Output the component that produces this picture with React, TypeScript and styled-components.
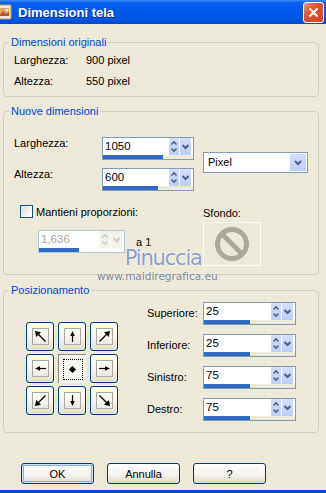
import { Fragment } from "react";
import styled, { createGlobalStyle } from "styled-components";

const GlobalStyle = createGlobalStyle`
  html, body {
    margin: 0;
    padding: 0;
    background: #ece9d8;
  }
  body {
    font-family: "Liberation Sans", Arial, sans-serif;
    font-size: 11px;
    color: #000;
  }
  * {
    box-sizing: border-box;
  }
`;

const Window = styled.div`
  position: relative;
  width: 326px;
  height: 493px;
  display: flex;
  flex-direction: column;
  background: #ece9d8;
  border-bottom: 3px solid #0841d8;
  overflow: hidden;
`;

const TitleBar = styled.div`
  height: 24px;
  flex: none;
  display: flex;
  align-items: center;
  padding-right: 2px;
  background: linear-gradient(
    to bottom,
    #3b8af4 0%,
    #0a62ef 12%,
    #0058e8 45%,
    #0056e6 80%,
    #0049cc 100%
  );
`;

const TitleIcon = styled.svg`
  flex: none;
  margin-left: -4px;
`;

const TitleText = styled.span`
  flex: 1;
  margin-left: 6px;
  font-weight: bold;
  font-size: 13px;
  color: #fff;
  text-shadow: 1px 1px 0 #0b2f9c;
`;

const CloseButton = styled.div`
  width: 21px;
  height: 21px;
  border: 1px solid #fff;
  border-radius: 3px;
  background: linear-gradient(135deg, #f0a085 0%, #e2552f 35%, #d8431d 100%);
  display: flex;
  align-items: center;
  justify-content: center;
`;

const Body = styled.div`
  flex: 1;
  display: flex;
  flex-direction: column;
  padding: 12px 7px 0 3px;
`;

const Group = styled.fieldset<{ $pad: string; $gap?: number }>`
  margin: ${(p) => p.$gap ?? 0}px 0 0 0;
  min-width: 0;
  border: 1px solid #d0d0bf;
  border-radius: 4px;
  padding: ${(p) => p.$pad};
`;

const Legend = styled.legend`
  margin-left: -5px;
  padding: 0 2px;
  color: #0046d5;
  font-size: 11px;
  line-height: 13px;
`;

const InfoGrid = styled.div`
  display: grid;
  grid-template-columns: 72px auto;
  grid-auto-rows: 21px;
  align-items: center;
`;

const SizeRow = styled.div`
  display: flex;
  align-items: flex-start;
`;

const SizeFields = styled.div<{ $label: number; $gap: number }>`
  display: grid;
  grid-template-columns: ${(p) => p.$label}px auto;
  grid-auto-rows: 23px;
  row-gap: ${(p) => p.$gap}px;
`;

const Label = styled.span<{ $center?: boolean }>`
  line-height: ${(p) => (p.$center ? "23px" : "13px")};
  white-space: nowrap;
`;

const SpinBox = styled.div<{ $w: number; $disabled?: boolean }>`
  width: ${(p) => p.$w}px;
  height: 23px;
  border: 1px solid ${(p) => (p.$disabled ? "#b4c3d8" : "#7f9db9")};
  background: #fff;
  display: flex;
  flex-direction: column;
`;

const SpinTop = styled.div`
  flex: 1;
  display: flex;
  padding-right: 2px;
`;

const SpinValue = styled.span<{ $disabled?: boolean }>`
  flex: 1;
  padding-left: 2px;
  line-height: 17px;
  font-size: 11.5px;
  color: ${(p) => (p.$disabled ? "#aca899" : "#000")};
`;

const SpinButton = styled.span<{ $w: number; $disabled?: boolean }>`
  width: ${(p) => p.$w}px;
  margin-left: 1px;
  display: flex;
  align-items: center;
  justify-content: center;
  background: ${(p) =>
    p.$disabled
      ? "#f1f0ea"
      : "linear-gradient(to bottom, #d3defc 0%, #bccdf9 100%)"};
`;

const Track = styled.div<{ $disabled?: boolean }>`
  height: 4px;
  background: ${(p) => (p.$disabled ? "#ffffff" : "#ece9d8")};
`;

const Fill = styled.div<{ $fill: number }>`
  width: ${(p) => p.$fill}px;
  height: 100%;
  background: #316ac5;
`;

const Combo = styled.div`
  width: 108px;
  height: 21px;
  margin: 15px 0 0 9px;
  border: 1px solid #7f9db9;
  background: #fff;
  padding: 1px;
  display: flex;
  align-items: stretch;
`;

const ComboText = styled.span`
  flex: 1;
  padding-left: 3px;
  line-height: 17px;
`;

const ComboButton = styled.span`
  width: 16px;
  display: flex;
  align-items: center;
  justify-content: center;
  background: linear-gradient(to bottom, #d3defc 0%, #bccdf9 100%);
`;

const ProportionRow = styled.div`
  display: flex;
  margin-top: 14px;
`;

const ProportionLeft = styled.div`
  width: 189px;
  display: flex;
  flex-direction: column;
`;

const CheckLine = styled.label`
  display: flex;
  align-items: center;
  height: 13px;
  padding-left: 6px;
  gap: 3px;
`;

const CheckBox = styled.span`
  width: 13px;
  height: 13px;
  flex: none;
  border: 1px solid #1c5180;
  background: linear-gradient(135deg, #dcdbd5 0%, #ffffff 90%);
`;

const RatioLine = styled.div`
  display: flex;
  align-items: center;
  margin-top: 12px;
  padding-left: 24px;
  gap: 11px;
`;

const BackgroundCol = styled.div`
  display: flex;
  flex-direction: column;
  padding-top: 2px;
`;

const Swatch = styled.div`
  width: 58px;
  height: 44px;
  margin-top: 2px;
  border: 1px solid #fbfbf8;
  display: flex;
  align-items: center;
  justify-content: center;
`;

const PlaceRow = styled.div`
  display: flex;
  align-items: flex-start;
`;

const PosGrid = styled.div`
  display: grid;
  grid-template-columns: repeat(3, 28px);
  grid-auto-rows: 29px;
  gap: 3px 4px;
  margin: 20px 0 0 12px;
`;

const PosButton = styled.div<{ $selected?: boolean }>`
  display: flex;
  align-items: center;
  justify-content: center;
  ${(p) =>
    p.$selected
      ? `
    border-top: 1px solid #8a877c;
    border-left: 1px solid #8a877c;
    background: #f6f5ef;
  `
      : `
    border: 1px solid #003c74;
    border-radius: 3px;
    background: linear-gradient(to bottom, #ffffff 0%, #f4f3ee 55%, #e2dfd5 100%);
  `}
`;

const FocusRect = styled.div`
  width: 20px;
  height: 21px;
  border: 1px dotted #000;
  display: flex;
  align-items: center;
  justify-content: center;
`;

const Diamond = styled.div`
  width: 5px;
  height: 5px;
  background: #000;
  transform: rotate(45deg);
`;

const MarginFields = styled(SizeFields)`
  margin-left: 29px;
`;

const ButtonRow = styled.div`
  display: flex;
  gap: 13px;
  margin-top: 30px;
  padding-left: 18px;
`;

const DialogButton = styled.button<{ $default?: boolean }>`
  width: 73px;
  height: 21px;
  padding: 0;
  border: 1px solid #003c74;
  border-radius: 3px;
  font-family: "Liberation Sans", Arial, sans-serif;
  font-size: 11px;
  color: #000;
  background: linear-gradient(to bottom, #ffffff 0%, #f2f1ec 60%, #dcd8cc 100%);
  box-shadow: ${(p) =>
    p.$default ? "inset 0 0 0 1px #cfe0fc, inset 0 0 0 2px #8fb2ec" : "none"};
`;

const Watermark = styled.div`
  position: absolute;
  left: 97px;
  top: 246px;
  display: flex;
  flex-direction: column;
  align-items: center;
  pointer-events: none;
`;

const WatermarkName = styled.span`
  margin-left: 12px;
  font-family: "DejaVu Sans", sans-serif;
  font-size: 21px;
  line-height: 24px;
  letter-spacing: -1.2px;
  color: #8e9fc8;
  text-shadow: 0 0 2px #fff, 0 0 1px #fff;
`;

const WatermarkSite = styled.span`
  font-family: "DejaVu Sans", sans-serif;
  font-size: 10.5px;
  line-height: 12px;
  color: #7d8797;
  text-shadow: 0 0 2px #fff;
`;

function SpinChevrons({ disabled }: { disabled?: boolean }) {
  const c = disabled ? "#cfcdc3" : "#4d6185";
  return (
    <svg width="10" height="17" viewBox="0 0 10 17">
      <path d="M2.5 6.5 L5 4 L7.5 6.5" fill="none" stroke={c} strokeWidth="1.6" />
      <path d="M2.5 10.5 L5 13 L7.5 10.5" fill="none" stroke={c} strokeWidth="1.6" />
    </svg>
  );
}

function DropChevron({ disabled, w = 11 }: { disabled?: boolean; w?: number }) {
  const c = disabled ? "#cfcdc3" : "#4d6185";
  const m = w / 2;
  return (
    <svg width={w} height="17" viewBox={`0 0 ${w} 17`}>
      <path
        d={`M${m - 3} 7 L${m} 10 L${m + 3} 7`}
        fill="none"
        stroke={c}
        strokeWidth="2"
      />
    </svg>
  );
}

function Spin({
  value,
  width,
  fill,
  disabled,
}: {
  value: string;
  width: number;
  fill: number;
  disabled?: boolean;
}) {
  return (
    <SpinBox $w={width} $disabled={disabled}>
      <SpinTop>
        <SpinValue $disabled={disabled}>{value}</SpinValue>
        <SpinButton $w={10} $disabled={disabled}>
          <SpinChevrons disabled={disabled} />
        </SpinButton>
        <SpinButton $w={11} $disabled={disabled}>
          <DropChevron disabled={disabled} />
        </SpinButton>
      </SpinTop>
      <Track $disabled={disabled}>
        <Fill $fill={fill} />
      </Track>
    </SpinBox>
  );
}

type Dir = "nw" | "n" | "ne" | "w" | "c" | "e" | "sw" | "s" | "se";

const straight: Record<string, number> = { n: 0, e: 90, s: 180, w: 270 };
const diagonal: Record<string, number> = { nw: 0, ne: 90, se: 180, sw: 270 };

function Arrow({ dir }: { dir: Dir }) {
  const isDiag = dir in diagonal;
  const rot = isDiag ? diagonal[dir] : straight[dir];
  return (
    <svg width="17" height="17" viewBox="0 0 17 17">
      <rect x="0.5" y="0.5" width="16" height="16" fill="none" stroke="#a8a69d" />
      <g transform={`rotate(${rot} 8.5 8.5)`}>
        {isDiag ? (
          <>
            <path d="M13.5 13.5 L5 5" stroke="#000" strokeWidth="1.2" />
            <path d="M3 3 L9 4.2 L4.2 9 Z" fill="#000" />
          </>
        ) : (
          <>
            <path d="M8.5 14 V6" stroke="#000" strokeWidth="1.2" />
            <path d="M8.5 3 L10.8 8 L6.2 8 Z" fill="#000" />
          </>
        )}
      </g>
    </svg>
  );
}

const dirs: Dir[] = ["nw", "n", "ne", "w", "c", "e", "sw", "s", "se"];

const margins = [
  { label: "Superiore:", value: "25" },
  { label: "Inferiore:", value: "25" },
  { label: "Sinistro:", value: "75" },
  { label: "Destro:", value: "75" },
];

export default function App() {
  return (
    <>
      <GlobalStyle />
      <Window>
        <TitleBar>
          <TitleIcon width="16" height="16" viewBox="0 0 16 16">
            <rect x="1" y="1" width="14" height="14" rx="1" fill="#f6ead2" stroke="#c49a62" />
            <rect x="3" y="4" width="10" height="8" fill="#e9a06a" />
            <path d="M3 12 L7 7 L10 10 L13 8 V12 Z" fill="#b3542b" />
            <circle cx="11" cy="6" r="1.3" fill="#fff3c8" />
          </TitleIcon>
          <TitleText>Dimensioni tela</TitleText>
          <CloseButton>
            <svg width="11" height="11" viewBox="0 0 11 11">
              <path d="M1.5 1.5 L9.5 9.5 M9.5 1.5 L1.5 9.5" stroke="#fff" strokeWidth="2.2" />
            </svg>
          </CloseButton>
        </TitleBar>

        <Body>
          <Group $pad="0 10px 5px">
            <Legend>Dimensioni originali</Legend>
            <InfoGrid>
              <span>Larghezza:</span>
              <span>900 pixel</span>
              <span>Altezza:</span>
              <span>550 pixel</span>
            </InfoGrid>
          </Group>

          <Group $pad="19px 10px 8px" $gap={8}>
            <Legend>Nuove dimensioni</Legend>
            <SizeRow>
              <SizeFields $label={88} $gap={8}>
                <Label>Larghezza:</Label>
                <Spin value="1050" width={92} fill={60} />
                <Label>Altezza:</Label>
                <Spin value="600" width={92} fill={55} />
              </SizeFields>
              <Combo>
                <ComboText>Pixel</ComboText>
                <ComboButton>
                  <DropChevron w={16} />
                </ComboButton>
              </Combo>
            </SizeRow>
            <ProportionRow>
              <ProportionLeft>
                <CheckLine>
                  <CheckBox />
                  <span>Mantieni proporzioni:</span>
                </CheckLine>
                <RatioLine>
                  <Spin value="1,636" width={87} fill={40} disabled />
                  <span>a 1</span>
                </RatioLine>
              </ProportionLeft>
              <BackgroundCol>
                <Label>Sfondo:</Label>
                <Swatch>
                  <svg width="36" height="36" viewBox="0 0 36 36">
                    <circle cx="18" cy="18" r="14.5" fill="none" stroke="#aca89c" strokeWidth="5" />
                    <path d="M8 8 L28 28" stroke="#aca89c" strokeWidth="5" />
                  </svg>
                </Swatch>
              </BackgroundCol>
            </ProportionRow>
          </Group>

          <Group $pad="5px 10px 11px" $gap={9}>
            <Legend>Posizionamento</Legend>
            <PlaceRow>
              <PosGrid>
                {dirs.map((d) =>
                  d === "c" ? (
                    <PosButton key={d} $selected>
                      <FocusRect>
                        <Diamond />
                      </FocusRect>
                    </PosButton>
                  ) : (
                    <PosButton key={d}>
                      <Arrow dir={d} />
                    </PosButton>
                  )
                )}
              </PosGrid>
              <MarginFields $label={56} $gap={9}>
                {margins.map((m) => (
                  <Fragment key={m.label}>
                    <Label $center>{m.label}</Label>
                    <Spin value={m.value} width={93} fill={46} />
                  </Fragment>
                ))}
              </MarginFields>
            </PlaceRow>
          </Group>

          <ButtonRow>
            <DialogButton $default>OK</DialogButton>
            <DialogButton>Annulla</DialogButton>
            <DialogButton>?</DialogButton>
          </ButtonRow>
        </Body>

        <Watermark>
          <WatermarkName>Pinuccia</WatermarkName>
          <WatermarkSite>www.maidiregrafica.eu</WatermarkSite>
        </Watermark>
      </Window>
    </>
  );
}
